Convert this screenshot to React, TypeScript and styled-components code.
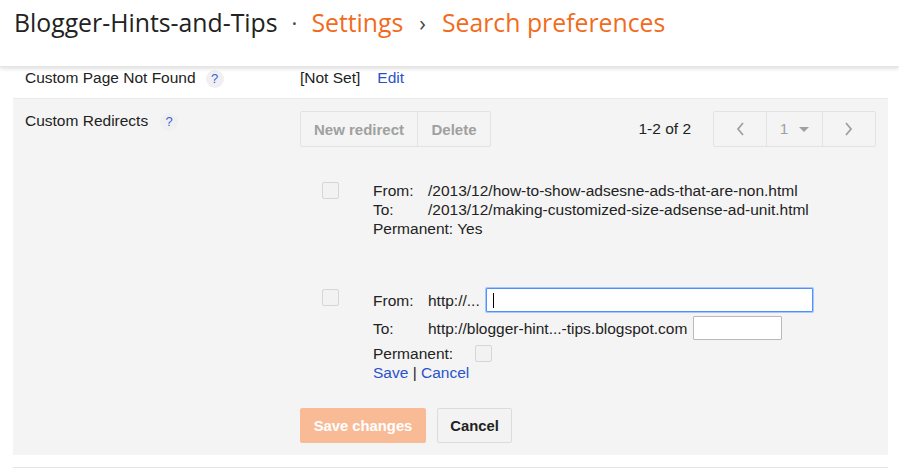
import React from 'react'
import styled, { createGlobalStyle } from 'styled-components'

const GlobalStyle = createGlobalStyle`
  body {
    margin: 0;
    background: #fff;
    font-family: Arial, "Liberation Sans", sans-serif;
    color: #222;
  }
`

const Page = styled.div`
  width: 899px;
  height: 476px;
  overflow: hidden;
`

const Header = styled.header`
  height: 67px;
  display: flex;
  align-items: center;
  padding: 0 14px 22px;
  font-family: "Open Sans", sans-serif;
  font-size: 24.8px;
  border-bottom: 1px solid #e5e5e5;
  box-shadow: 0 2px 4px rgba(0, 0, 0, 0.12);
  position: relative;
  z-index: 1;
  box-sizing: border-box;
`

const Crumb = styled.span<{ $accent?: boolean }>`
  color: ${(p) => (p.$accent ? '#f26b1d' : '#222')};
`

const Sep = styled.span<{ $gap: number }>`
  color: #444;
  margin: 0 ${(p) => p.$gap}px;
  font-size: 22px;
`

const Content = styled.div`
  padding: 0 11px 0 13px;
`

const SettingRow = styled.div<{ $shaded?: boolean }>`
  display: grid;
  grid-template-columns: 287px 1fr;
  padding: ${(p) => (p.$shaded ? '12px 12px 12px 0' : '1px 12px 10px 0')};
  background: ${(p) => (p.$shaded ? '#f4f4f4' : '#fff')};
  border-bottom: ${(p) => (p.$shaded ? 'none' : '1px solid #ebebeb')};
  font-size: 15.5px;
`

const Label = styled.div`
  padding-left: 12px;
  display: flex;
  align-items: flex-start;
  line-height: 20px;
`

const Help = styled.span<{ $gap: number }>`
  display: inline-flex;
  align-items: center;
  justify-content: center;
  width: 18px;
  height: 18px;
  border-radius: 50%;
  background: #f0f0f2;
  color: #3a62d6;
  font-size: 13px;
  margin-left: ${(p) => p.$gap}px;
  margin-top: 2px;
`

const Value = styled.div`
  line-height: 20px;
  display: flex;
  gap: 17px;
`

const Link = styled.a`
  color: #2a52cc;
  text-decoration: none;
  cursor: pointer;
`

const Toolbar = styled.div`
  display: flex;
  align-items: center;
`

const ButtonGroup = styled.div`
  display: flex;
  border: 1px solid #e2e2e2;
  border-radius: 2px;
  height: 36px;
  box-sizing: border-box;
`

const GroupButton = styled.div<{ $w: number }>`
  width: ${(p) => p.$w}px;
  display: flex;
  align-items: center;
  justify-content: center;
  color: #a0a0a0;
  font-weight: bold;
  font-size: 15px;
  & + & {
    border-left: 1px solid #e2e2e2;
  }
`

const Count = styled.div`
  margin-left: auto;
  margin-right: 22px;
  color: #222;
`

const Items = styled.div`
  display: flex;
  flex-direction: column;
`

const Item = styled.div<{ $top: number }>`
  display: grid;
  grid-template-columns: 73px 1fr;
  margin-top: ${(p) => p.$top}px;
`

const Check = styled.span<{ $left?: number; $top?: number }>`
  display: block;
  width: 17px;
  height: 17px;
  box-sizing: border-box;
  border: 1px solid #d6d6d6;
  border-radius: 2px;
  background: #f2f2f2;
  margin-left: ${(p) => p.$left ?? 22}px;
  margin-top: ${(p) => p.$top ?? 0}px;
`

const Lines = styled.div`
  display: flex;
  flex-direction: column;
  line-height: 19px;
`

const Line = styled.div<{ $h?: number; $top?: number }>`
  display: flex;
  align-items: center;
  min-height: ${(p) => p.$h ?? 19}px;
  margin-top: ${(p) => p.$top ?? 0}px;
`

const Key = styled.span`
  width: 55px;
  flex-shrink: 0;
`

const FieldInput = styled.input<{ $w: number; $focus?: boolean }>`
  width: ${(p) => p.$w}px;
  height: 24px;
  box-sizing: border-box;
  margin-left: 6px;
  padding: 0 6px;
  background: #fff;
  border: 1px solid ${(p) => (p.$focus ? '#4d90fe' : '#b9b9b9')};
  box-shadow: ${(p) => (p.$focus ? '0 0 0 1px rgba(77, 144, 254, 0.45)' : 'none')};
  border-radius: 1px;
  font: 15px Arial, "Liberation Sans", sans-serif;
  outline: none;
`

const InputWrap = styled.span`
  position: relative;
  display: inline-flex;
`

const Caret = styled.span`
  position: absolute;
  left: 13px;
  top: 5px;
  width: 1px;
  height: 15px;
  background: #000;
`

const Actions = styled.div`
  display: flex;
  gap: 11px;
  margin-top: 26px;
`

const ActionButton = styled.button<{ $primary?: boolean; $w: number }>`
  width: ${(p) => p.$w}px;
  height: 35px;
  border-radius: 2px;
  font: bold 14.8px Arial, "Liberation Sans", sans-serif;
  border: 1px solid ${(p) => (p.$primary ? '#f9bb96' : '#dcdcdc')};
  background: ${(p) => (p.$primary ? '#f9bb96' : '#f3f3f3')};
  color: ${(p) => (p.$primary ? '#fff' : '#222')};
  padding: 0;
`

const BottomLine = styled.div`
  margin-top: 12px;
  border-top: 1px solid #e5e5e5;
`

const Chevron = ({ dir }: { dir: 'left' | 'right' }) => (
  <svg width="10" height="16" viewBox="0 0 10 16">
    <path
      d={dir === 'left' ? 'M8 2 L3 8 L8 14' : 'M2 2 L7 8 L2 14'}
      fill="none"
      stroke="#a0a0a0"
      strokeWidth="1.8"
    />
  </svg>
)

const PageNum = styled.span`
  display: inline-flex;
  align-items: center;
  gap: 11px;
  color: #a0a0a0;
  font-weight: normal;
  font-size: 15.5px;
`

const Arrow = styled.span`
  width: 0;
  height: 0;
  border-left: 5px solid transparent;
  border-right: 5px solid transparent;
  border-top: 5px solid #a0a0a0;
`

export default function App() {
  return (
    <Page>
      <GlobalStyle />
      <Header>
        <Crumb>Blogger-Hints-and-Tips</Crumb>
        <Sep $gap={14}>·</Sep>
        <Crumb $accent>Settings</Crumb>
        <Sep $gap={16}>›</Sep>
        <Crumb $accent>Search preferences</Crumb>
      </Header>
      <Content>
        <SettingRow>
          <Label>
            Custom Page Not Found <Help $gap={10}>?</Help>
          </Label>
          <Value>
            <span>[Not Set]</span>
            <Link>Edit</Link>
          </Value>
        </SettingRow>
        <SettingRow $shaded>
          <Label>
            Custom Redirects <Help $gap={12}>?</Help>
          </Label>
          <div>
            <Toolbar>
              <ButtonGroup>
                <GroupButton $w={116}>New redirect</GroupButton>
                <GroupButton $w={72}>Delete</GroupButton>
              </ButtonGroup>
              <Count>1-2 of 2</Count>
              <ButtonGroup>
                <GroupButton $w={52}>
                  <Chevron dir="left" />
                </GroupButton>
                <GroupButton $w={55}>
                  <PageNum>
                    1 <Arrow />
                  </PageNum>
                </GroupButton>
                <GroupButton $w={52}>
                  <Chevron dir="right" />
                </GroupButton>
              </ButtonGroup>
            </Toolbar>
            <Items>
              <Item $top={34}>
                <Check $top={1} />
                <Lines>
                  <Line>
                    <Key>From:</Key>/2013/12/how-to-show-adsesne-ads-that-are-non.html
                  </Line>
                  <Line>
                    <Key>To:</Key>/2013/12/making-customized-size-adsense-ad-unit.html
                  </Line>
                  <Line>Permanent: Yes</Line>
                </Lines>
              </Item>
              <Item $top={50}>
                <Check $top={1} />
                <Lines>
                  <Line $h={24}>
                    <Key>From:</Key>http://...
                    <InputWrap>
                      <FieldInput $w={327} $focus readOnly />
                      <Caret />
                    </InputWrap>
                  </Line>
                  <Line $h={24} $top={4}>
                    <Key>To:</Key>http://blogger-hint...-tips.blogspot.com
                    <FieldInput $w={89} readOnly />
                  </Line>
                  <Line $h={18} $top={4}>
                    Permanent:
                    <Check $left={22} />
                  </Line>
                  <Line>
                    <Link>Save</Link>&nbsp;|&nbsp;<Link>Cancel</Link>
                  </Line>
                </Lines>
              </Item>
            </Items>
            <Actions>
              <ActionButton $primary $w={126}>
                Save changes
              </ActionButton>
              <ActionButton $w={75}>Cancel</ActionButton>
            </Actions>
          </div>
        </SettingRow>
        <BottomLine />
      </Content>
    </Page>
  )
}
